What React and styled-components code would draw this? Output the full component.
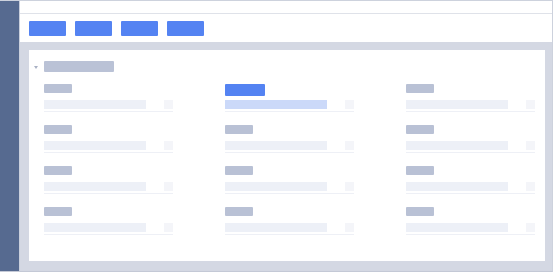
import React from 'react';
import styled, { createGlobalStyle } from 'styled-components';

const GlobalStyles = createGlobalStyle`
  html, body {
    margin: 0;
    padding: 0;
    width: 553px;
    height: 272px;
    overflow: hidden;
    background: #ffffff;
    font-family: 'Liberation Sans', Arial, sans-serif;
  }
  * {
    box-sizing: border-box;
  }
`;

const Frame = styled.div`
  display: flex;
  width: 553px;
  height: 272px;
  border-top: 1px solid #cdd2dd;
  border-right: 1px solid #cdd2dd;
  border-bottom: 1px solid #c4c9d6;
`;

const Sidebar = styled.aside`
  width: 20px;
  flex-shrink: 0;
  background: #566a90;
  border-right: 1px solid #c9cfdc;
`;

const Main = styled.div`
  flex: 1;
  display: flex;
  flex-direction: column;
  background: #d4d8e3;
`;

const TopStrip = styled.div`
  height: 13px;
  background: #ffffff;
  border-bottom: 1px solid #dfe2e9;
`;

const Toolbar = styled.div`
  height: 28px;
  display: flex;
  align-items: center;
  gap: 9px;
  padding: 1px 0 0 9px;
  background: #ffffff;
`;

const ToolButton = styled.div`
  width: 37px;
  height: 15px;
  border-radius: 1px;
  background: #5483f2;
`;

const Content = styled.div`
  flex: 1;
  display: flex;
  padding: 8px 7px 10px 9px;
`;

const Card = styled.section`
  flex: 1;
  background: #ffffff;
  padding: 11px 0 0 5px;
`;

const SectionHeader = styled.div`
  display: flex;
  align-items: center;
  gap: 6px;
  height: 11px;
`;

const Caret = styled.span`
  width: 0;
  height: 0;
  border-left: 2.5px solid transparent;
  border-right: 2.5px solid transparent;
  border-top: 3px solid #a9b1c4;
  margin-top: 1px;
`;

const HeaderBar = styled.div`
  width: 70px;
  height: 11px;
  border-radius: 1px;
  background: #bac2d6;
`;

const FieldGrid = styled.div`
  display: grid;
  grid-template-columns: repeat(3, 129px);
  column-gap: 52px;
  row-gap: 13px;
  margin: 12px 0 0 10px;
`;

const Field = styled.div`
  display: flex;
  flex-direction: column;
  width: 129px;
`;

const Label = styled.div`
  width: ${(p) => (p.$active ? '40px' : '28px')};
  height: ${(p) => (p.$active ? '12px' : '9px')};
  margin-bottom: ${(p) => (p.$active ? '4px' : '7px')};
  border-radius: 1px;
  background: ${(p) => (p.$active ? '#5483f2' : '#b9c1d5')};
`;

const InputRow = styled.div`
  display: flex;
  justify-content: space-between;
  height: 9px;
`;

const Input = styled.div`
  width: 102px;
  height: 9px;
  background: ${(p) => (p.$active ? '#cbd9f9' : '#edf0f7')};
`;

const Addon = styled.div`
  width: 9px;
  height: 9px;
  background: #f4f5f9;
`;

const Underline = styled.div`
  height: 1px;
  margin-top: 2px;
  background: #eef0f6;
`;

const fields = Array.from({ length: 12 }, (_, i) => ({ id: i, active: i === 1 }));

export default function App() {
  return (
    <>
      <GlobalStyles />
      <Frame>
        <Sidebar />
        <Main>
          <TopStrip />
          <Toolbar>
            <ToolButton />
            <ToolButton />
            <ToolButton />
            <ToolButton />
          </Toolbar>
          <Content>
            <Card>
              <SectionHeader>
                <Caret />
                <HeaderBar />
              </SectionHeader>
              <FieldGrid>
                {fields.map((f) => (
                  <Field key={f.id}>
                    <Label $active={f.active} />
                    <InputRow>
                      <Input $active={f.active} />
                      <Addon />
                    </InputRow>
                    <Underline />
                  </Field>
                ))}
              </FieldGrid>
            </Card>
          </Content>
        </Main>
      </Frame>
    </>
  );
}
